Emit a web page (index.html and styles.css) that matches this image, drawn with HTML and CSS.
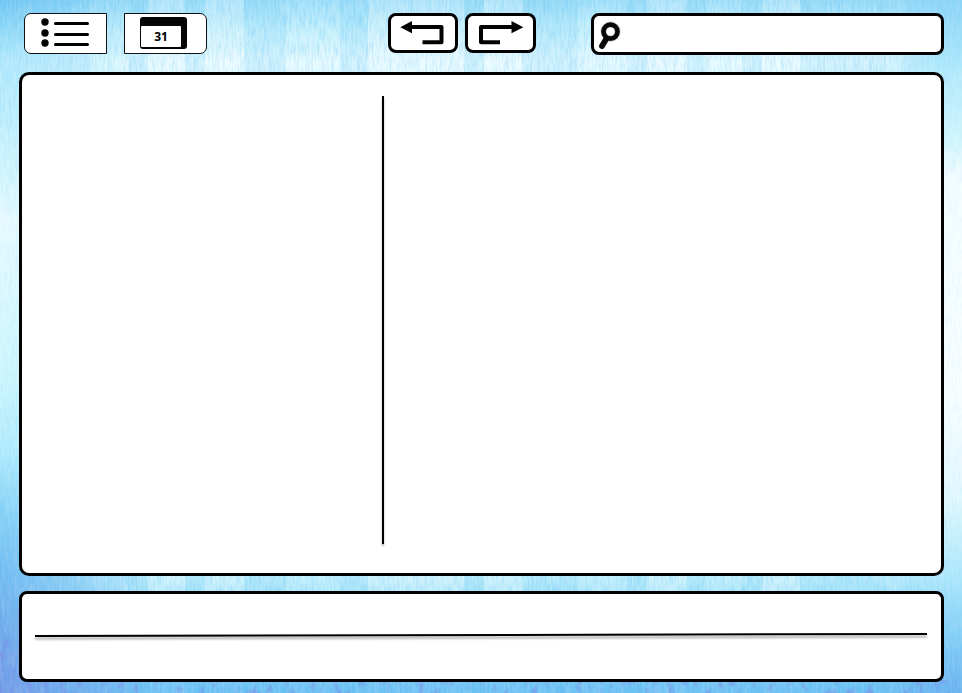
FILE: index.html
```
<!DOCTYPE html>
<html lang="en">
<head>
<meta charset="utf-8">
<title>Notes</title>
<link rel="stylesheet" href="styles.css">
</head>
<body>
<svg class="wood" width="962" height="693" viewBox="0 0 962 693" aria-hidden="true">
  <defs>
    <linearGradient id="sky" x1="0" y1="0" x2="0" y2="1">
      <stop offset="0" stop-color="#a3e0f9"/>
      <stop offset=".04" stop-color="#c3effc"/>
      <stop offset=".09" stop-color="#e6faff"/>
      <stop offset=".17" stop-color="#cdf4fe"/>
      <stop offset=".3" stop-color="#e1f9ff"/>
      <stop offset=".5" stop-color="#daf8ff"/>
      <stop offset=".65" stop-color="#c2f2fd"/>
      <stop offset=".83" stop-color="#c4f1fd"/>
      <stop offset=".88" stop-color="#a4e1fa"/>
      <stop offset="1" stop-color="#72c3f4"/>
    </linearGradient>
    <linearGradient id="leftShade" x1="0" y1="0" x2="0" y2="1">
      <stop offset="0" stop-color="#62bdf2" stop-opacity=".7"/>
      <stop offset=".08" stop-color="#98e1fa" stop-opacity=".6"/>
      <stop offset=".2" stop-color="#cdf4fd" stop-opacity=".6"/>
      <stop offset=".32" stop-color="#e8fafe"/>
      <stop offset=".55" stop-color="#ccf6fe"/>
      <stop offset=".65" stop-color="#b0eafc"/>
      <stop offset=".75" stop-color="#82cef6"/>
      <stop offset=".83" stop-color="#70bbf1"/>
      <stop offset=".92" stop-color="#70a8ea"/>
      <stop offset="1" stop-color="#7299e6"/>
    </linearGradient>
    <linearGradient id="rightShade" x1="0" y1="0" x2="0" y2="1">
      <stop offset="0" stop-color="#8bd3f7"/>
      <stop offset=".1" stop-color="#b0e9fb"/>
      <stop offset=".2" stop-color="#d0f5fd"/>
      <stop offset=".26" stop-color="#f4fdff"/>
      <stop offset=".58" stop-color="#f8feff"/>
      <stop offset=".72" stop-color="#dff8fe"/>
      <stop offset=".84" stop-color="#a9e5fb"/>
      <stop offset=".92" stop-color="#80cdf6"/>
      <stop offset="1" stop-color="#6bb4f0"/>
    </linearGradient>
    <linearGradient id="fadeL">
      <stop offset="0" stop-color="#fff"/><stop offset=".2" stop-color="#ccc"/><stop offset="1" stop-color="#000"/>
    </linearGradient>
    <linearGradient id="fadeR">
      <stop offset="0" stop-color="#000"/><stop offset=".75" stop-color="#fff"/>
    </linearGradient>
    <mask id="maskL"><rect width="150" height="693" fill="url(#fadeL)"/></mask>
    <mask id="maskR"><rect x="872" width="90" height="693" fill="url(#fadeR)"/></mask>
    <filter id="grain" x="0" y="0" width="100%" height="100%" color-interpolation-filters="sRGB">
      <feTurbulence type="fractalNoise" baseFrequency=".5 .07" numOctaves="3" seed="7"/>
      <feColorMatrix values="0 0 0 0 .18  0 0 0 0 .66  0 0 0 0 .93  2 0 0 0 -.8"/>
    </filter>
    <filter id="shine" x="0" y="0" width="100%" height="100%" color-interpolation-filters="sRGB">
      <feTurbulence type="fractalNoise" baseFrequency=".4 .06" numOctaves="3" seed="21"/>
      <feColorMatrix values="0 0 0 0 1  0 0 0 0 1  0 0 0 0 1  2 0 0 0 -.8"/>
    </filter>
    <filter id="violet" x="0" y="0" width="100%" height="100%" color-interpolation-filters="sRGB">
      <feTurbulence type="fractalNoise" baseFrequency=".12 .08" numOctaves="4" seed="4"/>
      <feColorMatrix values="0 0 0 0 .5  0 0 0 0 .52  0 0 0 0 .9  4 0 0 0 -2.2"/>
    </filter>
  </defs>
  <rect width="962" height="693" fill="url(#sky)"/>
  <g fill="#4cbdf0" fill-opacity=".12">
    <rect width="90" height="693"/><rect x="128" width="20" height="693"/>
    <rect x="185" width="20" height="693"/><rect x="244" width="42" height="693"/>
    <rect x="340" width="28" height="693"/><rect x="464" width="20" height="693"/>
    <rect x="522" width="56" height="693"/><rect x="627" width="20" height="693"/>
    <rect x="687" width="18" height="693"/><rect x="742" width="20" height="693"/>
    <rect x="800" width="86" height="693"/><rect x="904" width="38" height="693"/>
  </g>
  <g fill="#fff" fill-opacity=".18">
    <rect x="148" width="37" height="670"/><rect x="205" width="39" height="670"/>
    <rect x="368" width="96" height="670"/><rect x="484" width="38" height="670"/>
    <rect x="647" width="40" height="670"/><rect x="762" width="38" height="670"/>
  </g>
  <rect width="962" height="693" filter="url(#grain)" opacity=".16"/>
  <rect width="150" height="693" fill="url(#leftShade)" mask="url(#maskL)"/>
  <rect x="872" width="90" height="693" fill="url(#rightShade)" mask="url(#maskR)"/>
  <rect width="962" height="693" filter="url(#grain)" opacity=".08"/>
  <rect width="962" height="693" filter="url(#shine)" opacity=".17"/>
  <rect y="610" width="30" height="83" filter="url(#violet)" opacity=".4"/>
  <rect x="30" y="680" width="932" height="13" filter="url(#violet)" opacity=".5"/>
</svg>

<header class="toolbar">
  <button class="view-button view-list" aria-label="List view">
    <svg width="81" height="39" viewBox="25 14 81 39">
      <g fill="#050505"><circle cx="45" cy="22" r="3.7"/><circle cx="45" cy="33" r="3.7"/><circle cx="45" cy="43" r="3.7"/></g>
      <path d="M55.5 23.5H87.5M55.5 34.5H87.5M55.5 44.5H87.5" stroke="#000" stroke-width="3" stroke-linecap="round"/>
    </svg>
  </button>
  <button class="view-button view-calendar" aria-label="Calendar view">
    <span class="calendar"><span class="calendar-page">31</span></span>
  </button>
  <button class="history-button undo" aria-label="Undo">
    <svg width="64" height="34" viewBox="391 16 64 34">
      <path d="M410 27H441.5V42.3H422.5" fill="none" stroke="#000" stroke-width="4" stroke-linejoin="round"/>
      <path d="M400.3 27.2L412 21V33.2Z"/>
    </svg>
  </button>
  <button class="history-button redo" aria-label="Redo">
    <svg width="65" height="34" viewBox="468 16 65 34">
      <path d="M513 27H481V42.3H500" fill="none" stroke="#000" stroke-width="4" stroke-linejoin="round"/>
      <path d="M523.3 27.2L511.5 21V33.2Z"/>
    </svg>
  </button>
  <div class="search">
    <svg width="30" height="36" viewBox="594 16 30 36">
      <circle cx="610.5" cy="31.6" r="7" fill="none" stroke="#888" stroke-width="6" opacity=".5"/>
      <circle cx="610.5" cy="31.6" r="7" fill="none" stroke="#080808" stroke-width="4.7"/>
      <path d="M606.5 38.5L602 46" stroke="#080808" stroke-width="5.8" stroke-linecap="round"/>
    </svg>
  </div>
</header>

<main class="panel notebook"><div class="divider"></div></main>

<footer class="panel notes">
  <svg width="919" height="85" viewBox="22 594 919 85">
    <defs><filter id="soft" x="-2%" y="-200%" width="104%" height="600%"><feGaussianBlur stdDeviation="1"/></filter></defs>
    <path d="M35 637.6L927 635.6V637.6L35 639.6Z" fill="#000" opacity=".35" filter="url(#soft)"/>
    <path d="M35 636L927 634" stroke="#000" stroke-width="2"/>
  </svg>
</footer>
</body>
</html>
```
FILE: styles.css
```
* { box-sizing: border-box; }

body {
  margin: 0;
  width: 962px;
  height: 693px;
  padding: 13px 18px 11px 19px;
  display: flex;
  flex-direction: column;
  position: relative;
  overflow: hidden;
  background: #b9ebfb;
  font-family: "Open Sans", "Noto Sans", sans-serif;
}

svg { display: block; }

.wood {
  position: absolute;
  inset: 0;
  z-index: -1;
}

.toolbar {
  display: flex;
  align-items: flex-start;
  height: 42px;
  padding-left: 5px;
  margin-bottom: 17px;
}

button {
  padding: 0;
  margin: 0;
  background: #fff;
  color: #000;
  font-family: inherit;
  flex: none;
}

.view-button {
  width: 83px;
  height: 41px;
  border: 1px solid #111;
}

.view-list { border-radius: 7px 0 0 7px; }

.view-calendar {
  display: flex;
  margin-left: 17px;
  padding: 3px 0 0 15px;
  border-radius: 0 7px 7px 0;
}

.calendar {
  width: 47px;
  height: 32px;
  padding: 9px 6px 2px 1px;
  border-radius: 3px;
  background: #050505;
}

.calendar-page {
  display: flex;
  align-items: center;
  justify-content: center;
  height: 21px;
  border-radius: 1px;
  background: #fff;
  font-size: 12px;
  font-weight: 700;
  line-height: 21px;
}

.history-button {
  height: 40px;
  border: 3px solid #000;
  border-radius: 8px;
}

.undo { width: 70px; margin-left: 181px; }
.redo { width: 71px; margin-left: 7px; }

.search {
  width: 353px;
  height: 42px;
  margin-left: 55px;
  border: 3px solid #000;
  border-radius: 8px;
  background: #fff;
}

.panel {
  border: 3px solid #000;
  background: #fff;
}

.notebook {
  height: 504px;
  margin-bottom: 15px;
  padding: 21px 0 0 360px;
  border-radius: 10px;
}

.divider {
  width: 2px;
  height: 448px;
  background: #000;
  box-shadow: 0 2px 2px rgba(0, 0, 0, .35);
}

.notes {
  height: 91px;
  border-radius: 8px;
}
```
